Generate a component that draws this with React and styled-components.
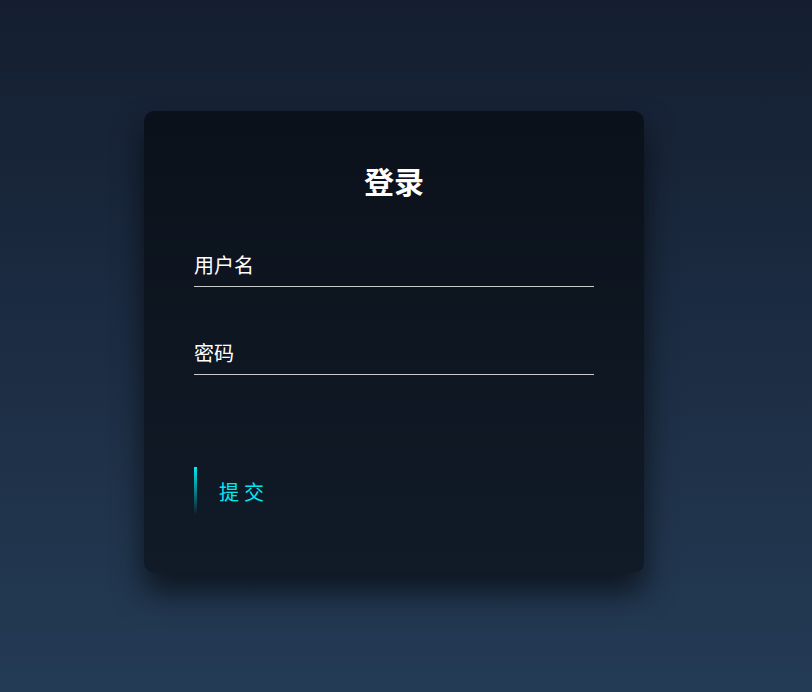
import React from "react";
import styled, { createGlobalStyle } from "styled-components";

const Global = createGlobalStyle`
  html, body {
    margin: 0;
    padding: 0;
    height: 100%;
  }
  body {
    font-family: "Noto Sans CJK SC", "Noto Sans", sans-serif;
    background: linear-gradient(#141e30, #243b55);
    min-height: 692px;
  }
  * { box-sizing: border-box; }
`;

const Page = styled.div`
  min-height: 692px;
  padding: 111px 0 0 144px;
`;

const Card = styled.div`
  width: 500px;
  padding: 48px 50px 58px;
  background: rgba(0, 0, 0, 0.5);
  border-radius: 10px;
  box-shadow: 0 19px 31px rgba(0, 0, 0, 0.6);
`;

const Title = styled.h2`
  margin: 0 0 35px;
  padding: 0;
  color: #fff;
  font-size: 30px;
  font-weight: 700;
  line-height: 43px;
  text-align: center;
`;

const Form = styled.form`
  display: flex;
  flex-direction: column;
`;

const UserBox = styled.div`
  position: relative;
  margin-bottom: 38px;
`;

const Input = styled.input`
  display: block;
  width: 100%;
  padding: 12.5px 0;
  font-family: inherit;
  font-size: 20px;
  line-height: 24px;
  height: 50px;
  color: #fff;
  border: none;
  border-bottom: 1px solid rgba(255, 255, 255, 0.78);
  outline: none;
  background: transparent;
`;

const Label = styled.label`
  position: absolute;
  top: 0;
  left: 0;
  padding: 12.5px 0;
  font-size: 20px;
  line-height: 30px;
  color: #fff;
  pointer-events: none;
`;

const ButtonRow = styled.div`
  display: flex;
  margin-top: 54px;
`;

const SubmitButton = styled.a`
  position: relative;
  display: inline-flex;
  align-items: center;
  height: 48px;
  padding: 0 25px;
  color: #03e9f4;
  font-size: 20px;
  line-height: 23px;
  letter-spacing: 5px;
  text-decoration: none;
  overflow: hidden;
  cursor: pointer;
`;

const EdgeLine = styled.span`
  position: absolute;
  top: 0;
  left: 0;
  width: 2.5px;
  height: 100%;
  background: linear-gradient(360deg, transparent, #03e9f4);
`;

export default function App() {
  return (
    <>
      <Global />
      <Page>
        <Card>
          <Title>登录</Title>
          <Form onSubmit={(e) => e.preventDefault()}>
            <UserBox>
              <Input type="text" id="user" />
              <Label htmlFor="user">用户名</Label>
            </UserBox>
            <UserBox>
              <Input type="password" id="pass" />
              <Label htmlFor="pass">密码</Label>
            </UserBox>
            <ButtonRow>
              <SubmitButton>
                <EdgeLine />
                提交
              </SubmitButton>
            </ButtonRow>
          </Form>
        </Card>
      </Page>
    </>
  );
}
